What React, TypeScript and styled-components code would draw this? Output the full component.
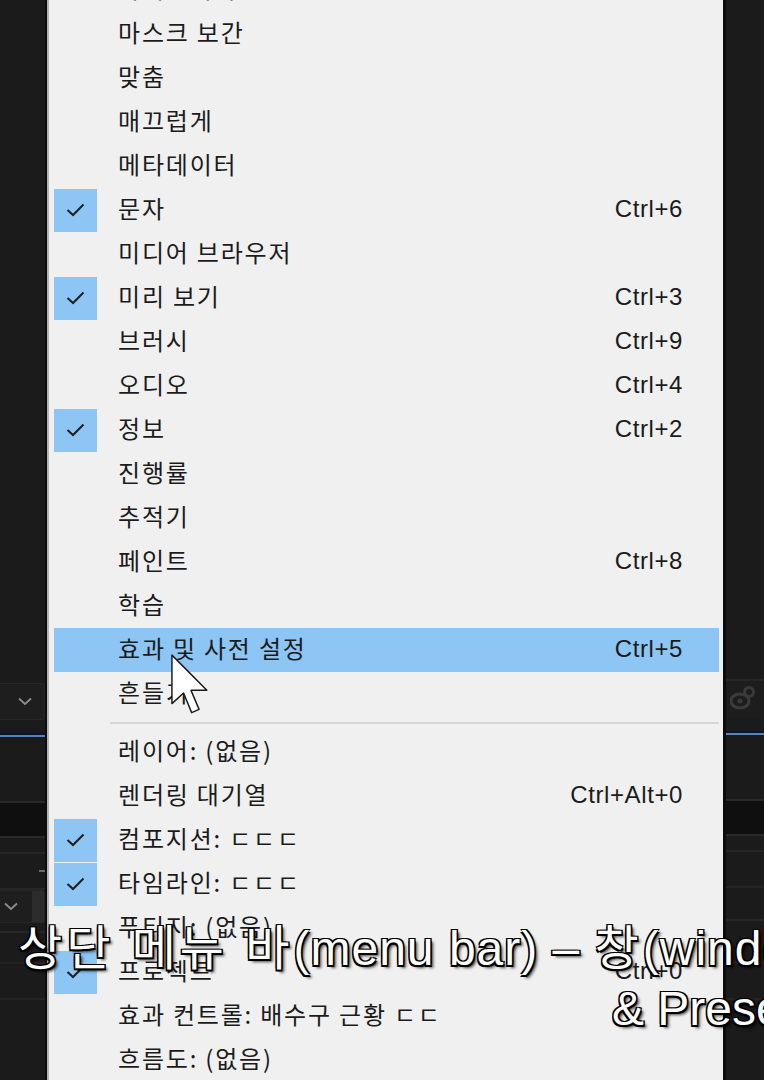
import styled, { createGlobalStyle } from "styled-components";

const GlobalStyle = createGlobalStyle`
  html, body {
    margin: 0;
    padding: 0;
    background: #1b1b1b;
    overflow: hidden;
  }
  * {
    box-sizing: border-box;
  }
`;

const Page = styled.div`
  position: relative;
  display: flex;
  align-items: flex-start;
  width: 764px;
  height: 1080px;
  overflow: hidden;
  font-family: "Liberation Sans", "Noto Sans CJK KR", sans-serif;
`;

const SidePanel = styled.div<{ $w: string }>`
  display: flex;
  flex-direction: column;
  width: ${({ $w }) => $w};
  flex: ${({ $w }) => ($w === "auto" ? "1" : "none")};
  height: 1080px;
  background: #1b1b1b;
`;

const Strip = styled.div<{ $h: number; $bg?: string; $line?: string }>`
  display: flex;
  align-items: center;
  height: ${({ $h }) => $h}px;
  flex: none;
  background: ${({ $bg }) => $bg || "#1b1b1b"};
  border-bottom: ${({ $line }) => ($line ? `2px solid ${$line}` : "none")};
`;

const BlueLine = styled.div`
  height: 4px;
  flex: none;
  background: #0a1630;
  border-bottom: 2px solid #5a82b8;
`;

const Dropdown = styled.div<{ $pad: number }>`
  display: flex;
  align-items: center;
  height: 100%;
  flex: 1;
  padding-left: ${({ $pad }) => $pad}px;
  background: #1e1e1e;
  border: 1px solid #262626;
  border-left: none;
  border-radius: 0 3px 3px 0;
`;

const Chevron = () => (
  <svg width="14" height="9" viewBox="0 0 14 9">
    <path d="M1 1.5 L7 7 L13 1.5" fill="none" stroke="#8d8d8d" strokeWidth="1.8" />
  </svg>
);

const Tick = styled.div`
  width: 6px;
  height: 2px;
  margin-left: auto;
  background: #6a6a6a;
`;

const GreyBlock = styled.div`
  width: 12px;
  height: 100%;
  margin-left: auto;
  background: #2c2c2c;
`;

const IconSlot = styled.div`
  margin-left: 4px;
`;

const Menu = styled.div`
  display: flex;
  flex-direction: column;
  width: 681px;
  flex: none;
  margin-top: -32px;
  padding: 0 4px 0 7px;
  background: #f0f0f0;
  border-left: 2px solid #0c0c0c;
  border-right: 3px solid #0c0c0c;
  box-shadow: inset 2px 0 0 #b5b5b5;
`;

const Row = styled.div<{ $active?: boolean }>`
  display: flex;
  align-items: center;
  height: 44px;
  flex: none;
  background: ${({ $active }) => ($active ? "#8dc6f4" : "transparent")};
  color: #1b1b1b;
  font-size: 24px;
`;

const CheckBox = styled.div<{ $on?: boolean }>`
  display: flex;
  align-items: center;
  justify-content: center;
  width: 43px;
  height: 43px;
  flex: none;
  background: ${({ $on }) => ($on ? "#8dc6f4" : "transparent")};
`;

const Label = styled.span`
  flex: 1;
  margin: 0 0 5px 21px;
  white-space: nowrap;
  font-family: "Noto Sans CJK KR", sans-serif;
  font-size: 24px;
  letter-spacing: 1.8px;
`;

const Shortcut = styled.span`
  margin: 0 36px 3px 0;
  white-space: nowrap;
  font-size: 24px;
  letter-spacing: 0.6px;
`;

const Separator = styled.div`
  display: flex;
  align-items: center;
  height: 14px;
  flex: none;
  padding-left: 56px;

  &::after {
    content: "";
    flex: 1;
    height: 2px;
    background: #d6d6d6;
  }
`;

const Subtitle = styled.div`
  position: absolute;
  left: 0;
  top: 919px;
  width: 764px;
  color: #ffffff;
  font-family: "Liberation Sans", "Noto Sans CJK KR", sans-serif;
  font-size: 48px;
  line-height: 60px;
  white-space: nowrap;
  text-shadow: -1.5px -1.5px 0 #000, 1.5px -1.5px 0 #000, -1.5px 1.5px 0 #000,
    1.5px 1.5px 0 #000, 3px 3px 3px rgba(0, 0, 0, 0.7);
`;

const SubLine = styled.div<{ $indent: number; $spacing: number }>`
  padding-left: ${({ $indent }) => $indent}px;
  letter-spacing: ${({ $spacing }) => $spacing}px;
`;

const Ko = styled.span`
  letter-spacing: 4px;
`;

const Cursor = styled.svg`
  position: absolute;
  left: 170px;
  top: 653px;
`;

const Check = () => (
  <svg width="19" height="14" viewBox="0 0 19 14">
    <path d="M1.5 7 L7 12 L17.5 1.5" fill="none" stroke="#1f1f1f" strokeWidth="2" />
  </svg>
);

const EyeLink = () => (
  <svg width="26" height="24" viewBox="0 0 26 24">
    <ellipse cx="10" cy="15" rx="9" ry="7" fill="none" stroke="#3a3a3a" strokeWidth="3" />
    <circle cx="10" cy="15" r="2.5" fill="#3a3a3a" />
    <circle cx="19" cy="6" r="4.5" fill="none" stroke="#3a3a3a" strokeWidth="3" />
  </svg>
);

type Item =
  | { sep: true }
  | { sep?: false; label: string; shortcut?: string; checked?: boolean; active?: boolean };

const items: Item[] = [
  { label: "라이브러리" },
  { label: "마스크 보간" },
  { label: "맞춤" },
  { label: "매끄럽게" },
  { label: "메타데이터" },
  { label: "문자", shortcut: "Ctrl+6", checked: true },
  { label: "미디어 브라우저" },
  { label: "미리 보기", shortcut: "Ctrl+3", checked: true },
  { label: "브러시", shortcut: "Ctrl+9" },
  { label: "오디오", shortcut: "Ctrl+4" },
  { label: "정보", shortcut: "Ctrl+2", checked: true },
  { label: "진행률" },
  { label: "추적기" },
  { label: "페인트", shortcut: "Ctrl+8" },
  { label: "학습" },
  { label: "효과 및 사전 설정", shortcut: "Ctrl+5", active: true },
  { label: "흔들기" },
  { sep: true },
  { label: "레이어: (없음)" },
  { label: "렌더링 대기열", shortcut: "Ctrl+Alt+0" },
  { label: "컴포지션: ㄷㄷㄷ", checked: true },
  { label: "타임라인: ㄷㄷㄷ", checked: true },
  { label: "푸티지: (없음)" },
  { label: "프로젝트", shortcut: "Ctrl+0", checked: true },
  { label: "효과 컨트롤: 배수구 근황 ㄷㄷ" },
  { label: "흐름도: (없음)" },
];

export default function App() {
  return (
    <Page>
      <GlobalStyle />

      <SidePanel $w="45px">
        <Strip $h={683} />
        <Strip $h={37}>
          <Dropdown $pad={18}>
            <Chevron />
          </Dropdown>
        </Strip>
        <Strip $h={13} />
        <BlueLine />
        <Strip $h={66} $line="#2a2a2a" />
        <Strip $h={35} $bg="#0f0f0f" $line="#2a2a2a" />
        <Strip $h={16} $line="#262626" />
        <Strip $h={36} $line="#262626">
          <Tick />
        </Strip>
        <Strip $h={33}>
          <Dropdown $pad={4}>
            <Chevron />
            <GreyBlock />
          </Dropdown>
        </Strip>
        <Strip $h={10} $line="#262626" />
        <Strip $h={31} $line="#242424" />
        <Strip $h={36} $line="#242424" />
        <Strip $h={60} />
      </SidePanel>

      <Menu>
        {items.map((it, i) =>
          it.sep ? (
            <Separator key={i} />
          ) : (
            <Row key={i} $active={it.active}>
              <CheckBox $on={it.checked}>{it.checked && <Check />}</CheckBox>
              <Label>{it.label}</Label>
              {it.shortcut && <Shortcut>{it.shortcut}</Shortcut>}
            </Row>
          )
        )}
      </Menu>

      <SidePanel $w="auto">
        <Strip $h={681} $line="#262626" />
        <Strip $h={37} $bg="#1d1d1d">
          <IconSlot>
            <EyeLink />
          </IconSlot>
        </Strip>
        <Strip $h={13} />
        <BlueLine />
        <Strip $h={66} $line="#2a2a2a" />
        <Strip $h={35} $bg="#0f0f0f" $line="#2a2a2a" />
        <Strip $h={16} $line="#262626" />
        <Strip $h={36} $line="#262626" />
        <Strip $h={33} $line="#262626" />
        <Strip $h={43} $line="#242424" />
        <Strip $h={36} $line="#242424" />
        <Strip $h={60} />
      </SidePanel>

      <Cursor width="42" height="65" viewBox="0 0 13 20">
        <path
          d="M0.6 0.6 L0.6 15.6 L4.2 12.3 L6.7 18.4 L9 17.4 L6.5 11.5 L11.4 11.5 Z"
          fill="#ffffff"
          stroke="#1a1a1a"
          strokeWidth="0.45"
          strokeLinejoin="round"
        />
      </Cursor>

      <Subtitle>
        <SubLine $indent={18} $spacing={1}>
          <Ko>상단 메뉴 바</Ko>(menu bar) – <Ko>창</Ko>(window) – <Ko>효과 및 사전 설정</Ko>(Effects
        </SubLine>
        <SubLine $indent={612} $spacing={0}>
          &amp; Presets)
        </SubLine>
      </Subtitle>
    </Page>
  );
}
